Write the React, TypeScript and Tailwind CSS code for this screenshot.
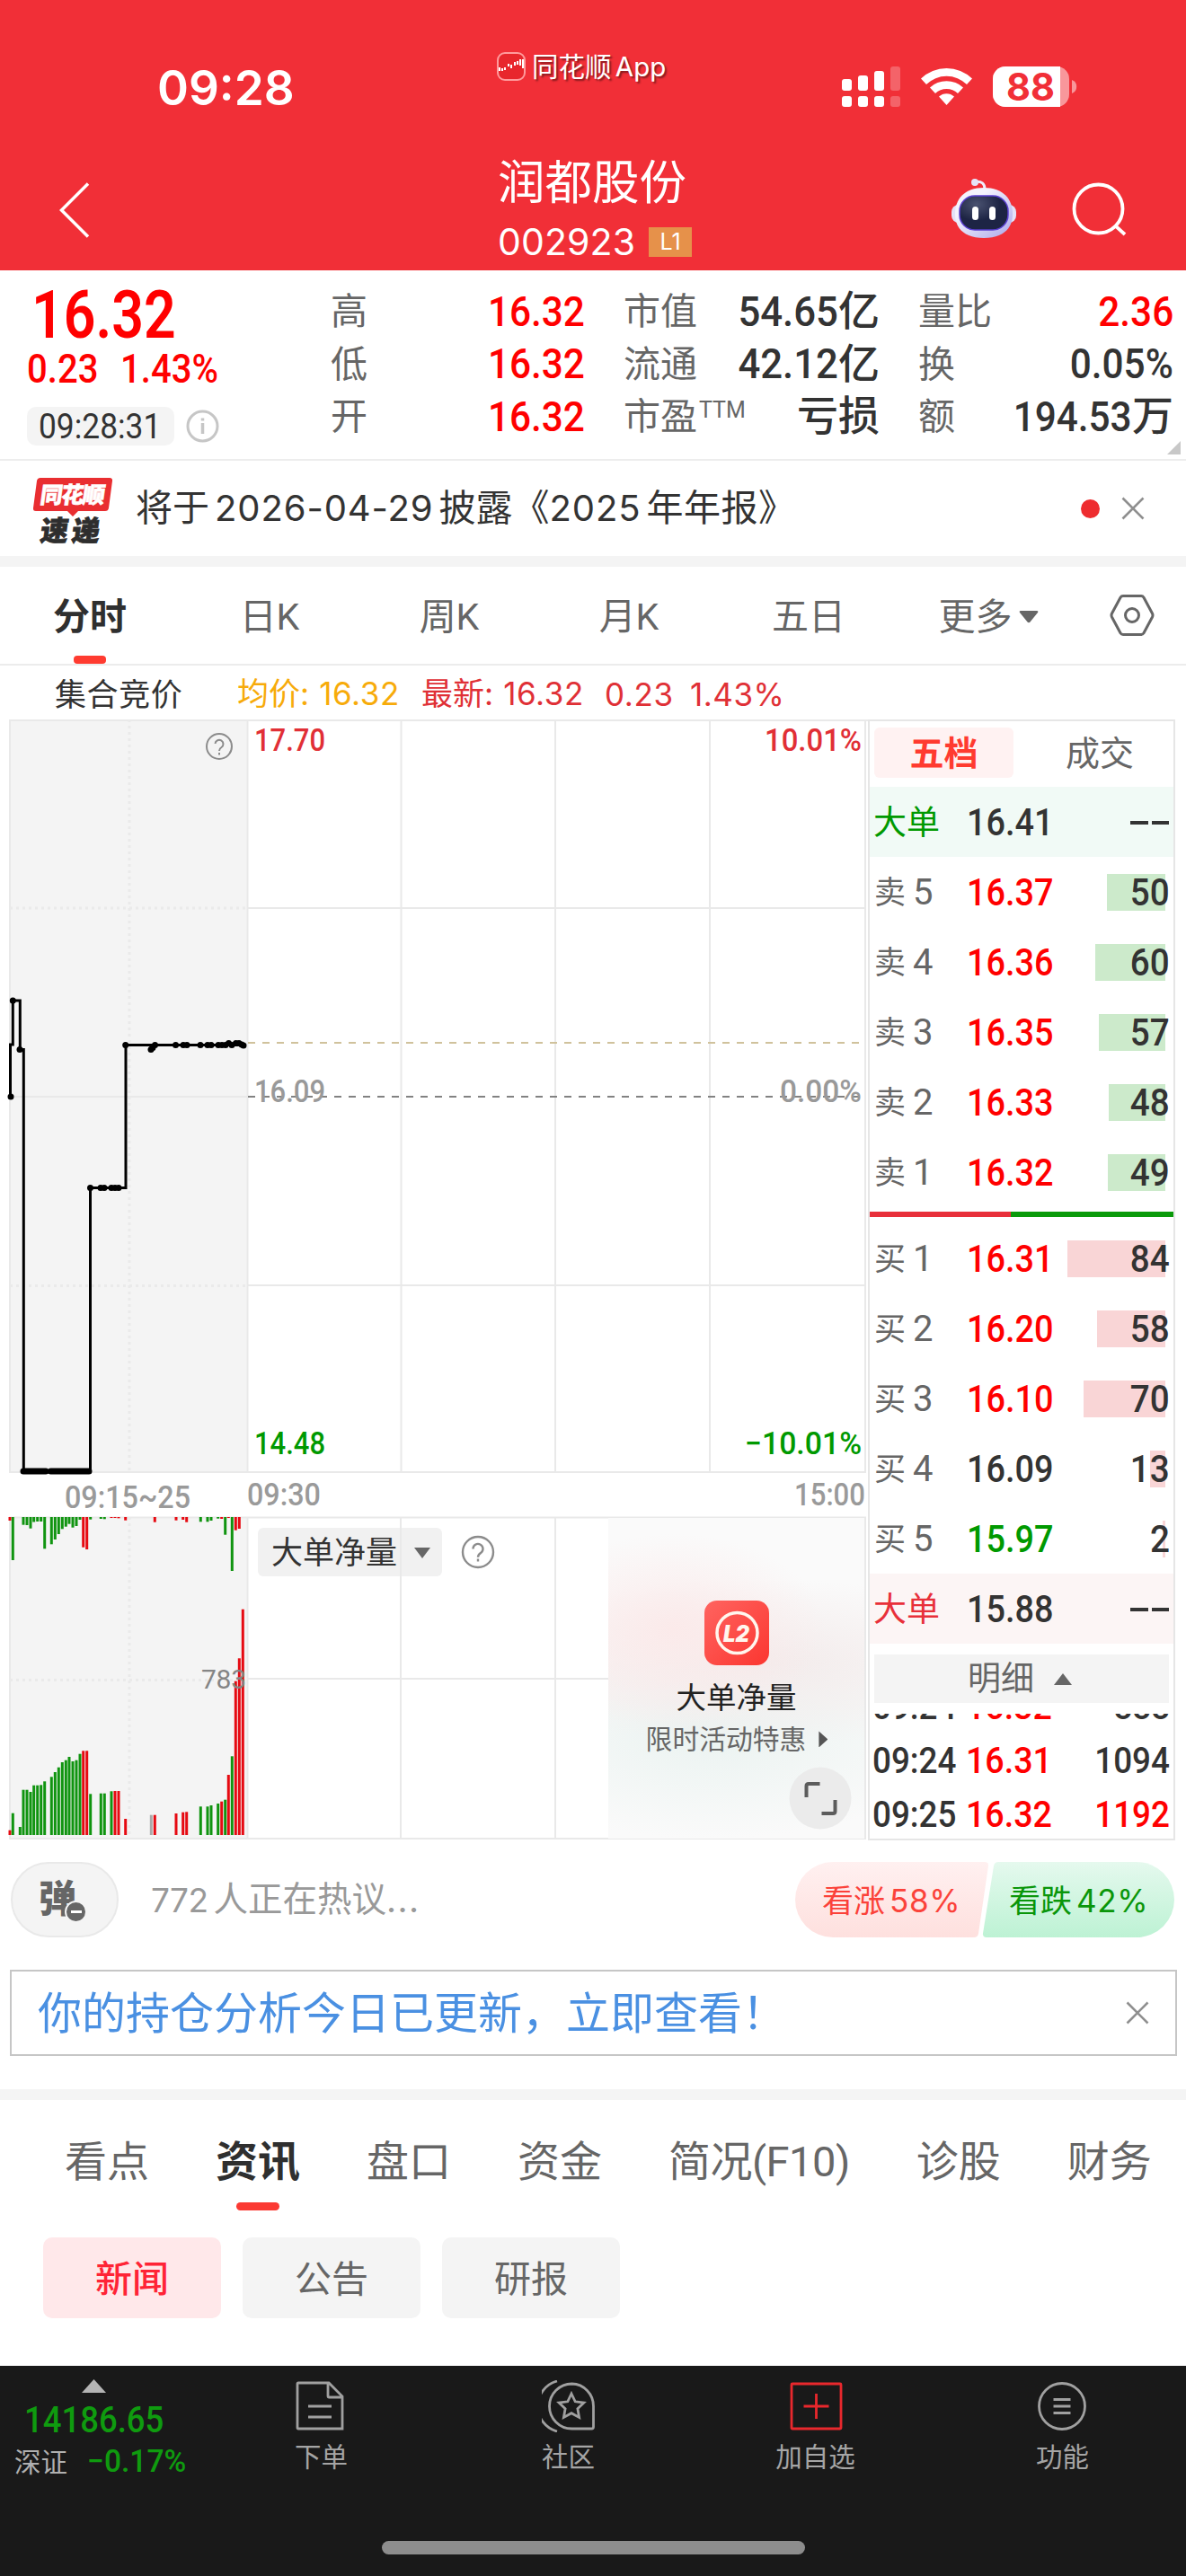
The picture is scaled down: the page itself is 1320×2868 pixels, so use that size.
import React from 'react';
import clsx from 'clsx';

const RED = '#e60a12';
const GREEN = '#109410';

const Num: React.FC<{ className?: string; children: React.ReactNode }> = ({ className, children }) => (
  <span className={clsx('inline-block shrink-0 whitespace-nowrap', className)}>{children}</span>
);

const Close: React.FC<{ className?: string }> = ({ className }) => (
  <svg className={className} width="26" height="26" viewBox="0 0 26 26" stroke="#8f8f8f" strokeWidth="2.6">
    <path d="M1.5 1.5 24.5 24.5M24.5 1.5 1.5 24.5" />
  </svg>
);

const StatusBar = () => (
  <div className="flex h-[150px] pt-[52px]">
    <div className="w-[553px] pt-[20px] pl-[175px] font-['Inter'] text-[53px] leading-none font-semibold">09:28</div>
    <div className="flex h-[44px] w-[384px] items-center gap-[7px]">
      <svg width="32" height="32" viewBox="0 0 32 32">
        <rect x="1" y="1" width="30" height="30" rx="8" fill="#e8262c" stroke="#ff9a9c" strokeWidth="2" />
        <path d="M3 21v-4M6 21v-3M9 20v-3M13 16v-3M16 18v-4M20 15v-4M23 14v-4M26 15V8M29 18V8" stroke="#fff" strokeWidth="2" />
      </svg>
      <span className="pt-[3px] text-[29.5px] leading-none [text-shadow:2px_2px_2px_rgba(0,0,0,0.45)]">
        同花顺 <span className="-ml-[3px] font-['Inter'] text-[29.500px]">App</span>
      </span>
    </div>
    <svg className="mt-[22px]" width="262" height="46" viewBox="937 74 262 46" fill="#fff">
      <rect x="937" y="88" width="11" height="13" rx="3" />
      <rect x="955" y="84" width="11" height="17" rx="3" />
      <rect x="973" y="79" width="11" height="22" rx="3" />
      <rect x="991" y="74" width="11" height="27" rx="3" opacity=".25" />
      <rect x="937" y="107" width="11" height="12" rx="3" />
      <rect x="955" y="107" width="11" height="12" rx="3" />
      <rect x="973" y="107" width="11" height="12" rx="3" />
      <rect x="991" y="107" width="11" height="12" rx="3" opacity=".25" />
      <path d="M1025 87.500a41 41 0 0 1 57 0l-6 6.500a32 32 0 0 0-45 0z" />
      <path d="M1035 97.500a27 27 0 0 1 37 0l-6 6.500a18 18 0 0 0-25 0z" />
      <path d="M1045 107.500a12.500 12.500 0 0 1 17 0l-8.500 9.500z" />
      <path d="M1119 74h57a14 14 0 0 1 14 14v17a14 14 0 0 1-14 14h-57a14 14 0 0 1-14-14V88a14 14 0 0 1 14-14z" opacity=".5" />
      <path d="M1119 74h61v45h-61a14 14 0 0 1-14-14V88a14 14 0 0 1 14-14z" />
      <path d="M1193 89a8 8 0 0 1 0 15z" opacity=".5" />
      <text x="1120" y="112" fontFamily="Inter" fontWeight="700" fontSize="42" textLength="54" lengthAdjust="spacingAndGlyphs" fill="#f12f37">88</text>
    </svg>
  </div>
);

const Header = () => (
  <header className="h-[301px] bg-[#f12f37] text-white">
    <StatusBar />
    <div className="flex h-[151px]">
      <svg className="mt-[52px] ml-[64px]" width="40" height="64" viewBox="0 0 40 64" fill="none" stroke="#fff" strokeWidth="3.5">
        <path d="M34 2.500 4.500 32 34 61.500" />
      </svg>
      <div className="ml-[450px] w-[504px]">
        <div className="mt-[26px] text-[52.500px] leading-[56px]">润都股份</div>
        <div className="mt-[17px] flex items-center">
          <span className="font-['Inter'] text-[41px] leading-none tracking-[0.1px]">002923</span>
          <span className="ml-[15px] flex h-[33px] w-[48px] items-center justify-center bg-[#e6914a] font-['Inter'] text-[25px] leading-none">L1</span>
        </div>
      </div>
      <svg className="mt-[46px]" width="76" height="72" viewBox="1058 196 76 72">
        <defs>
          <linearGradient id="head" x1="0" y1="0" x2="1" y2="1">
            <stop offset=".3" stopColor="#f4f3fd" />
            <stop offset="1" stopColor="#aaa6ea" />
          </linearGradient>
          <radialGradient id="face" cx=".35" cy=".25" r=".8">
            <stop offset="0" stopColor="#4a5270" />
            <stop offset=".6" stopColor="#1d2444" />
          </radialGradient>
        </defs>
        <path d="M1085 202.500c8-1 11 2 11 8" fill="none" stroke="#f0eefc" strokeWidth="3" />
        <circle cx="1085" cy="203" r="4" fill="#e6e4f8" />
        <rect x="1059" y="228" width="72" height="20" rx="8" fill="#e4e2f8" />
        <path d="M1095 209c22 0 32 13 32 29s-10 27-32 27-32-11-32-27 10-29 32-29z" fill="url(#head)" />
        <rect x="1068" y="218" width="54" height="38" rx="17" fill="url(#face)" stroke="#5a3fd0" strokeWidth="1.500" />
        <rect x="1082" y="230" width="7" height="15" rx="3.500" fill="#fff" />
        <rect x="1101" y="230" width="7" height="15" rx="3.500" fill="#fff" />
      </svg>
      <svg className="mt-[50px] ml-[56px]" width="70" height="68" viewBox="1190 200 70 68" fill="none" stroke="#fff" strokeWidth="3.800">
        <circle cx="1222.500" cy="232.500" r="27" />
        <path d="M1241.500 251.500 1252 261" />
      </svg>
    </div>
  </header>
);

const quoteRows = [
  { a: '高', av: '16.32', b: '市值', bv: '54.65', bu: '亿', c: '量比', cv: '2.36', cu: '', cRed: true },
  { a: '低', av: '16.32', b: '流通', bv: '42.12', bu: '亿', c: '换', cv: '0.05%', cu: '', cRed: false },
  { a: '开', av: '16.32', b: '市盈', bv: '', bu: '亏损', c: '额', cv: '194.53', cu: '万', cRed: false },
];

const Quote = () => (
  <section className="relative flex h-[212px] border-b-2 border-[#ededed]">
    <div className="w-[368px] text-[#f00]">
      <div className="mt-[13px] h-[73px] pl-[35px]">
        <Num className="origin-left scale-x-[.845] text-[74px] leading-[74px] font-semibold">16.32</Num>
      </div>
      <div className="flex h-[46px] pl-[30px] pt-px text-[45px] leading-[46px]">
        <Num className="w-[104px] origin-left scale-x-[.89] font-medium">0.23</Num>
        <Num className="origin-left scale-x-[.89] font-medium">1.43%</Num>
      </div>
      <div className="mt-[20px] flex items-center pl-[30px]">
        <div className="flex h-[43px] w-[164px] items-center rounded-[10px] bg-[#f4f4f4] pl-[13px] text-[38px] leading-none text-[#333]">
          <Num className="origin-left scale-x-[.93]">09:28:31</Num>
        </div>
        <svg className="ml-[13px]" width="37" height="37" viewBox="0 0 37 37" stroke="#c6c6c6" fill="none">
          <circle cx="18.500" cy="18.500" r="16.500" strokeWidth="3" />
          <path d="M18.500 15v12M18.500 9.500v3" strokeWidth="3.500" />
        </svg>
      </div>
    </div>
    <div className="w-[938px] pt-[16px] text-[41px] leading-none text-[#666]">
      {quoteRows.map((r) => (
        <div key={r.a} className="flex h-[58.500px] items-center">
          <span className="w-[41px] pt-[3px]">{r.a}</span>
          <span className="flex w-[242px] justify-end text-[47px] text-[#f00]">
            <Num className="origin-right scale-x-[.9] font-medium">{r.av}</Num>
          </span>
          <span className="ml-[43px] w-[84px] pt-[3px] whitespace-nowrap">{r.b}</span>
          <span className="-mt-[14px] w-[56px] text-[25px]">{r.b === '市盈' && 'TTM'}</span>
          <span className="flex w-[145px] items-center justify-end text-[47px] text-[#333]">
            <Num className="origin-right scale-x-[.93] font-medium">{r.bv}</Num>
            <span className="text-[46px] font-medium whitespace-nowrap">{r.bu}</span>
          </span>
          <span className="ml-[43px] w-[84px] shrink-0 pt-[3px] whitespace-nowrap">{r.c}</span>
          <span className={clsx('flex w-[200px] items-center justify-end text-[47px]', r.cRed ? 'text-[#f00]' : 'text-[#333]')}>
            <Num className="origin-right scale-x-[.9] font-medium">{r.cv}</Num>
            <span className="text-[46px] font-medium">{r.cu}</span>
          </span>
        </div>
      ))}
    </div>
    <div className="absolute right-[6px] bottom-[5px] h-[15px] w-[15px] bg-[#c8c8c8] [clip-path:polygon(100%_0,100%_100%,0_100%)]" />
  </section>
);

const Notice = () => (
  <section className="flex h-[106px] items-center">
    <svg className="mt-[4px] ml-[36px]" width="90" height="76" viewBox="36 527 90 76">
      <path d="M45 529h77q3.500 0 3 3.500l-4 30q-.5 3.500-4 3.500H87l-6 6-6-6H40q-3.500 0-3-3.500l4-30q.5-3.500 4-3.500z" fill="#e92e31" />
      <g fontFamily="Noto Sans CJK SC" fontWeight="900" transform="skewX(-8)">
        <text x="122" y="557" fontSize="25" textLength="72" fill="#fff" stroke="#fff" strokeWidth=".6">同花顺</text>
        <text x="128" y="599" fontSize="31" textLength="66" fill="#2e2e2e" stroke="#2e2e2e" strokeWidth=".8">速递</text>
      </g>
    </svg>
    <div className="ml-[25px] flex w-[1074px] items-center text-[41px] leading-none whitespace-nowrap text-[#333]">
      <span>将于</span>
      <span className="mx-[6px] font-['Inter'] text-[40px] tracking-[0.9px]">2026-04-29</span>
      <span>披露《</span>
      <span className="mr-[6px] font-['Inter'] text-[40px] tracking-[0.9px]">2025</span>
      <span className="tracking-[0.5px]">年年报》</span>
    </div>
    <span className="-ml-[22px] h-[21px] w-[21px] rounded-full bg-[#ee2c2f]" />
    <Close className="ml-[24px]" />
  </section>
);

const periods = ['分时', '日K', '周K', '月K', '五日', '更多'];

const PeriodTabs = () => (
  <nav className="flex h-[110px] border-b-2 border-[#ececec] text-[41px] leading-none text-[#666]">
    {periods.map((p, i) => (
      <div key={p} className={clsx('relative flex w-[200px] items-center justify-center pt-[4px]', i === 0 && 'font-bold text-[#2f2f2f]')}>
        {p}
        {p === '更多' && (
          <svg className="ml-[7px]" width="22" height="14" viewBox="0 0 22 14" fill="#666">
            <path d="M2 0h18q2 0 1 2L12.500 12.500q-1.500 1.500-3 0L1 2Q0 0 2 0z" />
          </svg>
        )}
        {i === 0 && <span className="absolute bottom-0 h-[9px] w-[36px] rounded-[4px] bg-[#ff3b30]" />}
      </div>
    ))}
    <svg className="mt-[30px] ml-[35px]" width="50" height="48" viewBox="0 0 50 48" fill="none" stroke="#666" strokeWidth="3">
      <path d="M15 2.500h20q2 0 3 1.700L47.500 22q1 2 0 4L38 43.800q-1 1.700-3 1.700H15q-2 0-3-1.700L2.500 26q-1-2 0-4L12 4.200q1-1.700 3-1.700z" />
      <circle cx="25" cy="24" r="7.500" />
    </svg>
  </nav>
);

const InfoRow = () => (
  <div className="flex h-[60px] items-center pt-[4px] pl-[61px] text-[35px] leading-none whitespace-nowrap text-[#e03036]">
    <span className="w-[203px] pt-[2px] tracking-[0.6px] text-[#333]">集合竞价</span>
    <span className="w-[205px] text-[#f7ab0a]">均价<span className="font-['Inter'] text-[35px] tracking-[0.6px]">: 16.32</span></span>
    <span className="w-[204px]">最新<span className="font-['Inter'] text-[35px] tracking-[0.6px]">: 16.32</span></span>
    <span className="w-[95px] font-['Inter'] text-[35px] tracking-[0.6px]">0.23</span>
    <span className="font-['Inter'] text-[35px] tracking-[0.5px]">1.43%</span>
  </div>
);

// x of the bar, its bottom edge and its colour, hanging from the top of the volume pane
const hanging: [number, number, 'r' | 'g'][] = [
  [11, 1693, 'r'], [14.300, 1737, 'g'], [26, 1697.700, 'g'], [30, 1698, 'g'], [34, 1701.700, 'g'], [37.700, 1694.500, 'g'],
  [41.700, 1694, 'g'], [45.700, 1694, 'g'], [49.700, 1724.300, 'g'], [57.300, 1719.300, 'g'], [61.300, 1714, 'g'], [65.300, 1708, 'g'],
  [69.300, 1702.300, 'g'], [73.300, 1699.700, 'g'], [77, 1696.700, 'g'], [81, 1700.700, 'g'], [85, 1699, 'g'], [89, 1692, 'g'],
  [92.700, 1722.700, 'r'], [96.700, 1725, 'r'], [100.700, 1691.700, 'g'], [112.300, 1691, 'g'], [116.300, 1691.300, 'g'],
  [124, 1690, 'r'], [128, 1690, 'r'], [132, 1690.300, 'r'], [139.700, 1692.700, 'r'], [172.300, 1694.700, 'r'], [196, 1692.700, 'r'],
  [203.700, 1692, 'r'], [207.700, 1694.700, 'r'], [223.300, 1694.300, 'g'], [231, 1694.300, 'g'], [235, 1693, 'g'],
  [242.700, 1690.700, 'g'], [246.700, 1691, 'r'], [250.700, 1708.700, 'g'], [254.300, 1690, 'r'], [258.300, 1749, 'g'],
  [262.300, 1703.700, 'r'], [266.300, 1702, 'r'],
];

// x of the bar, its top edge and its colour, standing on the baseline
const standing: [number, number, 'r' | 'g' | 'n'][] = [
  [11, 2037.700, 'r'], [14.300, 2018.700, 'g'], [22.300, 2034, 'g'], [26, 1992.700, 'g'], [30, 1992.700, 'g'], [34, 1995, 'g'],
  [37.700, 1987.700, 'g'], [41.700, 1987.700, 'g'], [45.700, 1987.300, 'g'], [49.700, 1983.300, 'g'], [57.300, 1978.300, 'g'],
  [61.300, 1973, 'g'], [65.300, 1967.700, 'g'], [69.300, 1962, 'g'], [73.300, 1959.700, 'g'], [77, 1956, 'g'], [81, 1961, 'g'],
  [85, 1959.700, 'g'], [89, 1952.700, 'g'], [92.700, 1949.300, 'r'], [96.700, 1949.300, 'r'], [100.700, 1997.300, 'g'],
  [112.300, 1996.700, 'g'], [116.300, 1996.700, 'g'], [124, 1994.300, 'g'], [128, 1994, 'r'], [132, 1994, 'r'], [139.700, 2025, 'r'],
  [168.300, 2020.700, 'n'], [172.300, 2020.700, 'r'], [196, 2019, 'r'], [203.700, 2017.700, 'r'], [207.700, 2017.300, 'r'],
  [223.300, 2011.300, 'g'], [231, 2011.300, 'g'], [235, 2010, 'g'], [242.700, 2008, 'g'], [246.700, 2005.700, 'r'],
  [250.700, 2003.700, 'g'], [254.300, 1976, 'r'], [258.300, 1955.300, 'g'], [262.300, 1871.700, 'r'], [266.300, 1846.300, 'r'],
  [270.300, 1791.700, 'r'],
];

const barColor = { r: RED, g: GREEN, n: '#aaa' };

const ticks: [number, number][] = [
  [12, 1221], [14.300, 1114], [22, 1168.500], [100.500, 1322.500], [112, 1322.500], [116, 1322.500], [124, 1322.500], [128, 1322.500],
  [132, 1322.500], [139.700, 1163.500], [168, 1168.500], [170, 1166.500], [172.500, 1163.500], [195.500, 1163.500], [204, 1163.500],
  [208, 1163.500], [223, 1163.500], [231, 1163.500], [235, 1163.500], [243, 1163.500], [247, 1163.500], [251, 1163.500],
  [254.500, 1161.500], [258, 1163.500], [262.500, 1161.500], [266, 1161.500], [269, 1163], [271, 1164],
];

const Label: React.FC<{ x: number; y: number; w: number; fill: string; children: string; end?: boolean }> = ({ x, y, w, fill, children, end }) => (
  <text x={x} y={y} fill={fill} fontSize="35" textLength={w} lengthAdjust="spacingAndGlyphs" textAnchor={end ? 'end' : 'start'}>
    {children}
  </text>
);

const Chart = () => (
  <svg className="block" width="966" height="1249" viewBox="0 801 966 1249" fontFamily="Roboto" fontWeight="500">
    <rect x="11" y="801" width="264" height="838" fill="#f4f4f4" />
    <rect x="11" y="1689" width="264" height="358" fill="#f4f4f4" />
    <g stroke="#e9e9e9" strokeWidth="2" fill="none">
      <path d="M10 802H966M275 1011H964M11 1221H275M275 1431H964" />
      <path d="M10 1639H964M10 1689.500H964M275 1869H964M10 2047H964" />
      <path d="M11 801V1640M275.500 801V1640M446.500 801V1640M618 801V1640M790 801V1640M963 801V1640" />
      <path d="M11 1689V2048M275.500 1689V2048M618 1689V2048M963 1689V2048" />
    </g>
    <g stroke="#eaeaea" strokeWidth="3" strokeDasharray="3 4" fill="none">
      <path d="M144 801V1640M144 1689V2047M11 1011H275M11 1431.500H275M11 1870.500H275" />
    </g>
    <path d="M276 1161H964" stroke="#d0c29c" strokeWidth="2" strokeDasharray="8 8" />
    <path d="M276 1221H964" stroke="#828282" strokeWidth="2" strokeDasharray="8 8" />

    <path
      d="M11.500 1221V1163H14.300V1114H22.300V1168.500H26.300V1638H100.500V1322.500H140V1163.500H272"
      fill="none"
      stroke="#000"
      strokeWidth="3"
    />
    <path d="M26 1638H51M56.500 1638H99" stroke="#000" strokeWidth="7" strokeLinecap="round" />
    {ticks.map(([x, y]) => (
      <circle key={x} cx={x} cy={y} r="3.500" />
    ))}

    <Label x={283} y={836} w={79} fill="#e12f36">17.70</Label>
    <Label x={959} y={836} w={108} fill="#e12f36" end>10.01%</Label>
    <Label x={283} y={1227} w={79} fill="#999">16.09</Label>
    <Label x={959} y={1227} w={91} fill="#999" end>0.00%</Label>
    <Label x={283} y={1619} w={79} fill="#090">14.48</Label>
    <Label x={959} y={1619} w={130} fill="#090" end>−10.01%</Label>
    <Label x={72} y={1679} w={140} fill="#9a9a9a">09:15~25</Label>
    <Label x={275} y={1676} w={82} fill="#9a9a9a">09:30</Label>
    <Label x={963} y={1676} w={79} fill="#9a9a9a" end>15:00</Label>

    <g fill="none" stroke="#8c8c8c" strokeWidth="2">
      <circle cx="244" cy="831" r="14" />
      <path d="M239.500 828a4.500 4.500 0 1 1 7 4q-2.500 1.500-2.500 4" />
      <path d="M244 838v2.500" />
    </g>

    {hanging.map(([x, y, c]) => (
      <rect key={x} x={x - 1.500} y="1689" width="3" height={y - 1689} fill={barColor[c]} />
    ))}
    {standing.map(([x, y, c]) => (
      <rect key={x} x={x - 1.500} y={y} width="3" height={2043 - y} fill={barColor[c]} />
    ))}
    <text x="224" y="1880" fontSize="30" fontWeight="400" fill="#858585" textLength="50">783</text>
  </svg>
);

const Promo = () => (
  <div className="absolute top-[889px] left-[677px] flex h-[357px] w-[285px] flex-col items-center bg-[#fafafa] bg-[radial-gradient(ellipse_60%_30%_at_25%_35%,#fbeaea_0%,transparent_100%),radial-gradient(ellipse_110%_26%_at_60%_45%,#f3ebeb_0%,transparent_100%),radial-gradient(ellipse_100%_32%_at_40%_68%,#ebf3f1_0%,transparent_100%)] leading-none">
    <svg className="mt-[92px]" width="72" height="72" viewBox="0 0 72 72">
      <defs>
        <linearGradient id="l2" x1="0" y1="0" x2="1" y2="1">
          <stop offset="0" stopColor="#ff6460" />
          <stop offset="1" stopColor="#fb3630" />
        </linearGradient>
      </defs>
      <rect width="72" height="72" rx="14" fill="url(#l2)" />
      <circle cx="36.500" cy="36" r="22.500" fill="none" stroke="#fff6ee" strokeWidth="3.500" />
      <text x="21" y="46" fontFamily="Inter" fontWeight="900" fontStyle="italic" fontSize="26" textLength="29" lengthAdjust="spacingAndGlyphs" fill="#fff6ee">L2</text>
    </svg>
    <div className="mt-[20px] text-[33.500px] text-[#222]">大单净量</div>
    <div className="mt-[14px] flex items-center pl-px text-[29.800px] text-[#666]">
      限时活动特惠
      <span className="ml-[14px] h-[18px] w-[10px] bg-[#555] [clip-path:polygon(0_0,100%_50%,0_100%)]" />
    </div>
    <svg className="absolute right-[14px] bottom-[10px]" width="70" height="70" viewBox="0 0 70 70">
      <circle cx="35" cy="35" r="34.500" fill="#ebebeb" />
      <path d="M19.500 34V21.500q0-2.500 2.500-2.500h12.500M51.500 37v12.500q0 2.500-2.500 2.500H36.500" fill="none" stroke="#5c5c5c" strokeWidth="4" />
    </svg>
  </div>
);

const ChartPane = () => (
  <div className="relative w-[966px]">
    <Chart />
    <div className="absolute top-[900px] left-[287px] flex items-center leading-none">
      <div className="flex h-[54px] w-[205px] items-center rounded-[6px] bg-[#f1f1f1] pt-[2px] pl-[15px] text-[35px] text-[#333]">
        大单净量
        <span className="ml-[19px] h-[12px] w-[18px] bg-[#666] [clip-path:polygon(0_0,100%_0,50%_100%)]" />
      </div>
      <svg className="ml-[21px]" width="38" height="38" viewBox="0 0 38 38" fill="none" stroke="#8c8c8c" strokeWidth="2.400">
        <circle cx="19" cy="19" r="17" />
        <path d="M13.500 15.500a5.500 5.500 0 1 1 8.800 4.300q-3.300 2.200-3.300 5" />
        <path d="M19 26.500v3" />
      </svg>
    </div>
    <div className="absolute top-[888px] left-[445px] h-[359px] w-[2px] bg-[#e9e9e9]" />
    <Promo />
  </div>
);

type Level = { side: string; n: string; price: string; color: string; vol: string; bar: number };

const asks: Level[] = [
  { side: '卖', n: '5', price: '16.37', color: 'text-[#f00]', vol: '50', bar: 65 },
  { side: '卖', n: '4', price: '16.36', color: 'text-[#f00]', vol: '60', bar: 78 },
  { side: '卖', n: '3', price: '16.35', color: 'text-[#f00]', vol: '57', bar: 74 },
  { side: '卖', n: '2', price: '16.33', color: 'text-[#f00]', vol: '48', bar: 63 },
  { side: '卖', n: '1', price: '16.32', color: 'text-[#f00]', vol: '49', bar: 64 },
];

const bids: Level[] = [
  { side: '买', n: '1', price: '16.31', color: 'text-[#f00]', vol: '84', bar: 109 },
  { side: '买', n: '2', price: '16.20', color: 'text-[#f00]', vol: '58', bar: 76 },
  { side: '买', n: '3', price: '16.10', color: 'text-[#f00]', vol: '70', bar: 91 },
  { side: '买', n: '4', price: '16.09', color: 'text-[#333]', vol: '13', bar: 17 },
  { side: '买', n: '5', price: '15.97', color: 'text-[#090]', vol: '2', bar: 3 },
];

const LevelRow: React.FC<{ level: Level; tint: string }> = ({ level, tint }) => (
  <div className="relative flex h-[78px] items-center pt-[2px] pl-[5px]">
    <span className={clsx('absolute top-[19px] right-[9px] h-[41px]', tint)} style={{ width: level.bar }} />
    <span className="w-[43px] text-[35px] text-[#666]">{level.side}</span>
    <span className="w-[60px] text-[40px] text-[#666]">{level.n}</span>
    <Num className={clsx('w-[120px] origin-left scale-x-[.9] text-[42px] font-medium', level.color)}>{level.price}</Num>
    <span className="relative flex flex-1 justify-end pr-[4px] text-[42px] text-[#333]">
      <Num className="origin-right scale-x-[.92] font-medium">{level.vol}</Num>
    </span>
  </div>
);

const BigRow: React.FC<{ price: string; className: string }> = ({ price, className }) => (
  <div className={clsx('flex h-[78px] items-center pt-[2px] pl-[4px]', className)}>
    <span className="w-[104px] text-[37px]">大单</span>
    <Num className="w-[120px] origin-left scale-x-[.9] text-[42px] font-medium text-[#333]">{price}</Num>
    <span className="flex flex-1 items-center justify-end gap-[4px] pr-[5px]">
      <span className="h-[3.500px] w-[19.500px] bg-[#333]" />
      <span className="h-[3.500px] w-[19.500px] bg-[#333]" />
    </span>
  </div>
);

const trades = [
  { time: '09:24', price: '16.32', vol: '888', color: 'text-[#333]' },
  { time: '09:24', price: '16.31', vol: '1094', color: 'text-[#333]' },
  { time: '09:25', price: '16.32', vol: '1192', color: 'text-[#f00]' },
];

const OrderBook = () => (
  <div className="h-[1248px] w-[342px] border-2 border-[#e6e6e6] leading-none">
    <div className="flex h-[73px] items-start pt-[7px] pl-[5px] text-[38px]">
      <div className="flex h-[56px] w-[155px] items-center justify-center rounded-[6px] bg-[#fff2f2] pt-[2px] font-bold text-[#ff3b30]">五档</div>
      <div className="flex h-[56px] flex-1 items-center justify-center pt-[2px] pl-[14px] text-[#666]">成交</div>
    </div>
    <BigRow price="16.41" className="bg-[#f1faf6] text-[#090]" />
    {asks.map((l) => <LevelRow key={l.n} level={l} tint="bg-[#cceacb]" />)}
    <div className="mt-[5px] mb-[7px] flex h-[6px]">
      <div className="w-[157px] bg-[#e8303a]" />
      <div className="flex-1 bg-[#0a9a0a]" />
    </div>
    {bids.map((l) => <LevelRow key={l.n} level={l} tint="bg-[#f9d5d6]" />)}
    <BigRow price="15.88" className="bg-[#fcf5f5] text-[#e8303a]" />
    <div className="mx-[5px] mt-[12px] flex h-[54px] items-center justify-center bg-[#f4f4f4] pt-px pr-[4px] text-[37px] text-[#666]">
      明细
      <span className="ml-[22px] h-[13px] w-[20px] bg-[#666] [clip-path:polygon(50%_0,100%_100%,0_100%)]" />
    </div>
    <div className="mt-[12px] flex h-[136px] flex-col overflow-hidden text-[40px]">
      <div className="-mt-[37px]">
        {trades.map((t) => (
          <div key={t.vol} className="flex h-[60px] items-center pl-[3px]">
            <Num className="w-[104px] origin-left scale-x-[.92] font-medium text-[#333]">{t.time}</Num>
            <Num className="w-[120px] origin-left scale-x-[.94] font-medium text-[#f00]">{t.price}</Num>
            <span className={clsx('flex flex-1 justify-end pr-[4px]', t.color)}>
              <Num className="origin-right scale-x-[.92] font-medium">{t.vol}</Num>
            </span>
          </div>
        ))}
      </div>
    </div>
  </div>
);

const Discuss = () => (
  <div className="flex h-[84px] items-center pl-[12px] leading-none">
    <div className="relative flex h-[84px] w-[120px] items-center rounded-full border-2 border-[#e9e9e9] bg-[#f4f4f4] pl-[29px] text-[42px] font-black text-[#666]">
      弹
      <span className="absolute top-[41px] left-[58px] flex h-[25px] w-[25px] items-center justify-center rounded-full border-2 border-[#f4f4f4] bg-[#666]">
        <span className="h-[3px] w-[12px] bg-white" />
      </span>
    </div>
    <div className="ml-[36px] flex w-[717px] items-center pt-px text-[38.500px] text-[#999]">
      <span className="mr-[6px] font-['Inter'] text-[37px] tracking-[-0.6px]">772</span>人正在热议<span className="font-['Inter'] tracking-[1.5px]">...</span>
    </div>
    <div className="relative h-[84px] w-[423px] text-[35px]">
      <svg className="absolute" width="423" height="84" viewBox="885 2073 423 84">
        <defs>
          <linearGradient id="up" x1="0" y1="0" x2="0" y2="1">
            <stop offset="0" stopColor="#fff0f0" />
            <stop offset="1" stopColor="#fee0de" />
          </linearGradient>
          <linearGradient id="down" x1="0" y1="0" x2="0" y2="1">
            <stop offset="0" stopColor="#e5f9ee" />
            <stop offset="1" stopColor="#bdf2d4" />
          </linearGradient>
        </defs>
        <path d="M927 2073h169q4.500 0 4 4.500l-11 75q-.8 4.500-5 4.500H927a42 42 0 0 1 0-84z" fill="url(#up)" />
        <path d="M1111 2073h154a42 42 0 0 1 0 84h-167q-4.500 0-4-4.500l12-75q.8-4.500 5-4.500z" fill="url(#down)" />
      </svg>
      <div className="relative flex h-[84px] items-center pt-[3px] pl-[30px]">
        <span className="w-[208px] text-[#fb423a]">看涨<span className="ml-[5px] font-['Inter'] text-[35px] tracking-[0.6px]">58%</span></span>
        <span className="text-[#0a960a]">看跌<span className="ml-[5px] font-['Inter'] text-[35px] tracking-[0.6px]">42%</span></span>
      </div>
    </div>
  </div>
);

const sections = ['看点', '资讯', '盘口', '资金', '简况(F10)', '诊股', '财务'];

const NewsTabs = () => (
  <>
    <nav className="flex h-[132px] gap-[74px] pl-[72px] text-[47px] leading-none whitespace-nowrap text-[#666]">
      {sections.map((s) => (
        <div
          key={s}
          className={clsx(
            'relative flex justify-center pt-[45px]',
            s === '资讯' && 'font-bold text-[#2f2f2f]',
            s === '简况(F10)' && 'tracking-[-0.5px]',
          )}
        >
          {s}
          {s === '资讯' && <span className="absolute top-[114px] h-[9px] w-[48px] rounded-full bg-[#fb3a33]" />}
        </div>
      ))}
    </nav>
    <div className="mt-[21px] flex h-[143px] gap-[24px] pl-[48px] text-[41px] leading-none">
      {['新闻', '公告', '研报'].map((c, i) => (
        <div
          key={c}
          className={clsx(
            'flex h-[90px] w-[198px] items-center justify-center rounded-[10px] pt-[4px]',
            i === 0 ? 'bg-[#ffe8ea] font-medium text-[#ff2436]' : 'bg-[#f4f4f4] text-[#666]',
          )}
        >
          {c}
        </div>
      ))}
    </div>
  </>
);

const actions = [
  {
    name: '下单',
    icon: <path d="M4 3h34l15 15v36H4q-1 0-1-1V4q0-1 1-1zM37 3v15q0 1 1 1h15M15 29h26M15 41h26" />,
  },
  {
    name: '社区',
    icon: (
      <>
        <path d="M33.500 4a25 25 0 1 0 0 50h22q2 0 2-2V29A24.500 25 0 0 0 33.500 4zM17 1a29 29 0 0 0 0 56" />
        <path d="m33 15 4.200 8.800 9.700 1.300-7 6.700 1.700 9.600-8.600-4.700-8.600 4.700 1.700-9.600-7-6.700 9.700-1.300z" />
      </>
    ),
  },
  {
    name: '加自选',
    icon: <path d="M4 4h53q1 0 1 1v48q0 1-1 1H4q-1 0-1-1V5q0-1 1-1zM30.500 15v28M16.500 29h28" />,
  },
  {
    name: '功能',
    icon: (
      <>
        <circle cx="29" cy="29" r="25.500" />
        <path d="M19.500 21.500h19M19.500 29h19M19.500 36.500h19" />
      </>
    ),
  },
];

const Footer = () => (
  <footer className="relative flex h-[234px] bg-[#191919] leading-none text-[#a5a5a5]">
    <div className="w-[220px] pt-[15px] text-[#0f9b0f]">
      <div className="ml-[91px] h-[15px] w-[27px] bg-[#b4b4b4] [clip-path:polygon(50%_0,100%_100%,0_100%)]" />
      <div className="mt-[8px] h-[44px] pl-[27px] text-[41px] leading-[44px]">
        <Num className="origin-left scale-x-[.89] font-medium">14186.65</Num>
      </div>
      <div className="mt-[6px] flex h-[36px] items-center pl-[16px]">
        <span className="w-[81px] pt-[5px] text-[29.500px] text-[#b0b0b0]">深证</span>
        <Num className="origin-left scale-x-[.96] text-[35px] font-medium">−0.17%</Num>
      </div>
    </div>
    {actions.map((a) => (
      <div key={a.name} className="flex w-[275px] flex-col items-center pt-[16px]">
        <svg width="60" height="58" viewBox="0 0 60 58" fill="none" strokeWidth="2.800" stroke={a.name === '加自选' ? '#e8282d' : '#a0a0a0'}>
          {a.icon}
        </svg>
        <span className="mt-[14px] text-[29.500px]">{a.name}</span>
      </div>
    ))}
    <div className="absolute bottom-[24px] left-[425px] h-[15px] w-[471px] rounded-full bg-[#8d8d8d]" />
  </footer>
);

export default function App() {
  return (
    <div className="w-[1320px] overflow-hidden bg-white font-['Roboto','Noto_Sans_CJK_SC',sans-serif]">
      <Header />
      <Quote />
      <Notice />
      <div className="h-[12px] bg-[#f4f4f4]" />
      <PeriodTabs />
      <InfoRow />
      <div className="flex h-[1272px]">
        <ChartPane />
        <OrderBook />
      </div>
      <Discuss />
      <div className="mt-[36px] ml-[11px] flex h-[96px] w-[1299px] items-center border-2 border-[#c6c6c6] pl-[29px] text-[49px] leading-none text-[#4a90e2]">
        <span className="w-[1211px] pt-[2px]">你的持仓分析今日已更新，立即查看！</span>
        <Close />
      </div>
      <div className="mt-[37px] h-[12px] bg-[#f4f4f4]" />
      <NewsTabs />
      <Footer />
    </div>
  );
}
